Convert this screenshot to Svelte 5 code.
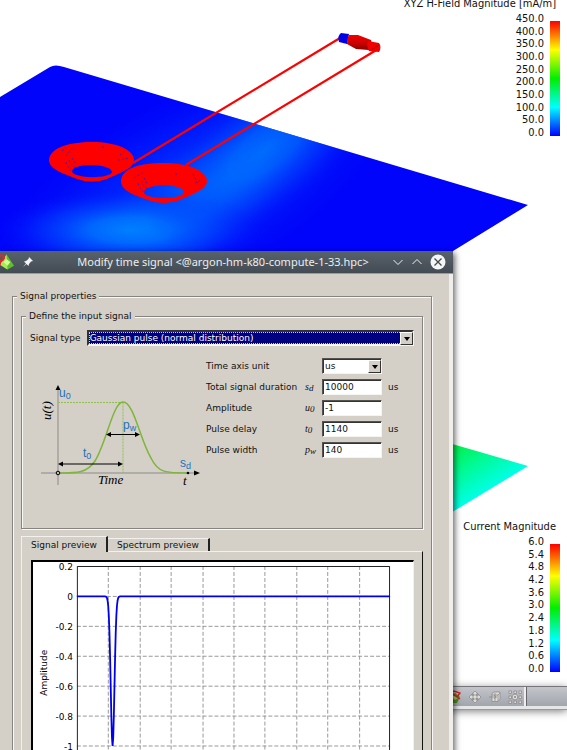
<script>

    let signalType = 'Gaussian pulse (normal distribution)'
    let unit = 'us'
    let tab = 'signal'

    let fields = [
        { id: 'duration', label: 'Total signal duration', sym: 's', sub: 'd', value: '10000', unit: 'us' },
        { id: 'amplitude', label: 'Amplitude', sym: 'u', sub: '0', value: '-1', unit: '' },
        { id: 'delay', label: 'Pulse delay', sym: 't', sub: '0', value: '1140', unit: 'us' },
        { id: 'width', label: 'Pulse width', sym: 'p', sub: 'w', value: '140', unit: 'us' }
    ]

    const hField = ['450.0', '400.0', '350.0', '300.0', '250.0', '200.0', '150.0', '100.0', '50.0', '0.0']
    const current = ['6.0', '5.4', '4.8', '4.2', '3.6', '3.0', '2.4', '1.8', '1.2', '0.6', '0.0']

    // plot area, in chart units
    const left = 44, right = 358, top = 4, zero = 34, step = 30
    const rows = ['0.2', '0', '-0.2', '-0.4', '-0.6', '-0.8', '-1']
    const cols = [1, 2, 3, 4, 5, 6, 7, 8, 9]

    const pulse = (duration, amp, delay, width) => {
        const pts = []
        for (let t = 0; t <= duration; t += 20) {
            const u = amp * Math.exp(-4 * Math.LN2 * ((t - delay) / width) ** 2)
            pts.push(`${left + (right - left) * t / duration},${zero + .5 - u * step * 5}`)
        }
        return pts.join(' ')
    }

    $: points = pulse(...fields.map(f => +f.value))

</script>

<main>
    <section class='view field'>
        <svg class='scene' viewBox='0 0 567 251' preserveAspectRatio='xMinYMin slice' aria-hidden='true'>
            <defs>
                <clipPath id='plane'><path d='M0 97L50 67Q55 64 64 67L528 205L453 251H0Z' /></clipPath>
                <radialGradient id='glow'>
                    <stop offset='0' stop-color='#0088ff' />
                    <stop offset='.3' stop-color='#007cff' stop-opacity='.85' />
                    <stop offset='.65' stop-color='#0050ff' stop-opacity='.45' />
                    <stop offset='1' stop-color='#0010ff' stop-opacity='0' />
                </radialGradient>
                <linearGradient id='core' x2='0' y2='1'>
                    <stop offset='0' stop-color='#f00000' />
                    <stop offset='.5' stop-color='#d00000' />
                    <stop offset='1' stop-color='#8c0000' />
                </linearGradient>
            </defs>
            <g clip-path='url(#plane)'>
                <rect width='567' height='251' fill='#0004fa' />
                <ellipse cx='190' cy='190' rx='240' ry='100' fill='url(#glow)' opacity='.4' transform='rotate(-28 190 190)' />
                <ellipse cx='195' cy='200' rx='110' ry='60' fill='url(#glow)' opacity='.5' transform='rotate(-25 195 200)' />
                <ellipse cx='130' cy='230' rx='135' ry='42' fill='url(#glow)' opacity='.9' />
                <ellipse cx='265' cy='150' rx='140' ry='62' fill='url(#glow)' opacity='.7' transform='rotate(-36 265 150)' />
            </g>
            <path d='M133 163L340 38M186 165L378 49' stroke='#ff0000' stroke-width='2.2' fill='none' />
            <g fill='#ff0000' fill-rule='evenodd'>
                <path d='M49 160C50 148 68 142 92 142C117 142 134 150 134 160C134 169 117 174 107 179Q92 184 77 179C66 174 49 170 49 160ZM72 171C72 179 111 179 112 172C110 163 74 163 72 171Z' />
                <path d='M121 181C122 168 140 163 164 163C189 163 207 171 207 181C207 190 190 195 180 200Q163 206 148 200C138 196 121 192 121 181ZM144 192C144 200 183 200 184 192C182 183 146 183 144 192Z' />
            </g>
            <g fill='none' stroke='#1020e0' stroke-width='.7' stroke-dasharray='2 2'>
                <path d='M66 162Q69 170 73 172M69 160Q72 167 77 168M72 158L76 164M62 151L66 148M66 156L73 147M120 155L125 151M118 160L130 158M102 147H105' />
                <path d='M138 183Q141 191 145 193M141 181Q144 188 149 189M144 178L148 185M134 178L143 172M193 174L198 184M195 183L201 180M175 174H178' />
            </g>
            <path d='M341 33L349 34L347 44L339 42Q337 36 341 33Z' fill='#0000e8' />
            <path d='M349 35L358 35L371 40Q373 46 369 50L356 49L347 44Q347 38 349 35Z' fill='url(#core)' />
            <path d='M368 41L379 43Q382 47 379 52L369 51Q366 46 368 41Z' fill='#f00000' />
            <path d='M371 50L379 45' stroke='#b00000' />
        </svg>
        <div class='legend'>
            <h2>XYZ H-Field Magnitude [mA/m]</h2>
            <div class='scale'>
                <ul>{#each hField as v}<li>{v}</li>{/each}</ul>
                <div class='bar'></div>
            </div>
        </div>
    </section>

    <section class='view surface'>
        <svg class='scene' viewBox='0 0 567 435' preserveAspectRatio='xMinYMin slice' aria-hidden='true'>
            <defs>
                <linearGradient id='green' gradientUnits='userSpaceOnUse' x1='450' y1='190' x2='482' y2='242'>
                    <stop offset='0' stop-color='#00ee38' />
                    <stop offset='.5' stop-color='#00fa90' />
                    <stop offset='1' stop-color='#00ffe4' />
                </linearGradient>
            </defs>
            <path d='M380 172L528 215L380 305Z' fill='url(#green)' />
        </svg>
        <div class='legend'>
            <h2>Current Magnitude</h2>
            <div class='scale'>
                <ul>{#each current as v}<li>{v}</li>{/each}</ul>
                <div class='bar'></div>
            </div>
        </div>
    </section>

    <footer>
        <div class='tools'>
            <button aria-label='Model'>
                <svg viewBox='0 0 14 14'>
                    <path d='M1 6L7 3L12 7L9 13H2Z' fill='#4c8f20' />
                    <path d='M3 7L7 5L10 8L7 10Z' fill='#a8d860' />
                    <path d='M1 5L6 1L12 3L9 7L5 4M9 7L12 9' fill='none' stroke='#d82020' stroke-width='1.4' />
                </svg>
            </button>
            <button aria-label='Move'>
                <svg viewBox='0 0 14 14'>
                    <path d='M7 1L10 4H8V6H10V4L13 7L10 10V8H8V10H10L7 13L4 10H6V8H4V10L1 7L4 4V6H6V4H4Z' fill='#dddcd5' stroke='#85858a' stroke-width='.7' />
                </svg>
            </button>
            <button aria-label='Box'>
                <svg viewBox='0 0 14 14'>
                    <path d='M4 3.500L6 2H12V9L10 11.500H4Z' fill='#dedcd3' stroke='#85858a' stroke-width='.7' />
                    <path d='M4 5H10V11M10 5L12 3M1 7H9M6 5L8 7L6 9M7 3V11' fill='none' stroke='#8c8c8e' stroke-width='.8' />
                </svg>
            </button>
            <button aria-label='Grid'>
                <svg viewBox='0 0 14 14'>
                    <g fill='#e0ded5' stroke='#85858a' stroke-width='.7'>
                        {#each [1, 6, 11] as x}
                            {#each [1, 6, 11] as y}
                                <rect {x} {y} width='2.4' height='2.4' />
                            {/each}
                        {/each}
                        <circle cx='7' cy='7' r='2.8' />
                    </g>
                    <circle cx='7' cy='7' r='1' fill='#858585' />
                </svg>
            </button>
        </div>
        <div class='status'></div>
    </footer>

    <div class='dialog' role='dialog' aria-labelledby='title'>
        <header>
            <svg class='logo' viewBox='0 0 16 18' aria-hidden='true'>
                <path d='M7 1L15 13L8 17L0 12Z' fill='#5fc02c' />
                <path d='M7 1L8 17L0 12Z' fill='#a6ec58' />
                <path d='M7 6L11 9L8 13L4 9Z' fill='#d7ffa0' />
                <path d='M0 2H3Q6 4 3 7L0 8M0 8V12' fill='none' stroke='#e02828' stroke-width='2' />
            </svg>
            <button aria-label='Keep above'>
                <svg viewBox='0 0 12 12'>
                    <path d='M7 1L11 5L9 5.5L7 8L6.5 10L4.5 8L1 11L4 7.500L2 5.500L4 5L6.500 3Z' fill='#f3f4f5' />
                </svg>
            </button>
            <h1 id='title'>Modify time signal &lt;@argon-hm-k80-compute-1-33.hpc&gt;</h1>
            <button aria-label='Minimize'>
                <svg viewBox='0 0 12 12'><path d='M1.500 4L6 8.500L10.500 4' fill='none' stroke='#eef0f1' /></svg>
            </button>
            <button aria-label='Maximize'>
                <svg viewBox='0 0 12 12'><path d='M1.500 8L6 3.500L10.500 8' fill='none' stroke='#eef0f1' /></svg>
            </button>
            <button class='close' aria-label='Close'>
                <svg viewBox='0 0 16 16'>
                    <circle cx='8' cy='8' r='7.500' fill='#f4f5f5' />
                    <path d='M4.500 4.500L11.500 11.500M11.500 4.500L4.500 11.500' stroke='#414a52' stroke-width='1.300' />
                </svg>
            </button>
        </header>

        <form>
            <fieldset>
                <legend>Signal properties</legend>

                <fieldset class='input'>
                    <legend>Define the input signal</legend>
                    <div class='type'>
                        <label for='type'>Signal type</label>
                        <span class='combo wide'>
                            <select id='type' bind:value={signalType}>
                                <option>Gaussian pulse (normal distribution)</option>
                            </select>
                        </span>
                    </div>

                    <div class='body'>
                        <svg class='diagram' viewBox='0 0 164 106' aria-label='Gaussian pulse'>
                            <path d='M20 8V103M3 91H156' stroke='#8b8a86' fill='none' />
                            <path d='M20 3L22.500 8H17.500ZM162 91L156 88.500V93.500Z' />
                            <path d='M20 20.500H85M85 20.500V91' stroke='#8fc050' stroke-dasharray='2 1' fill='none' />
                            <path d='M20 91C40 91 49 91 57 79C68 62 75 20 85 20C96 20 102 58 113 76C120 91 128 91 151 91' fill='none' stroke='#7fb539' stroke-width='1.500' />
                            <path d='M22 82H83M71 52.500H99' stroke='#000' />
                            <path d='M20 82L25 79.500V84.500ZM85 82L80 79.500V84.500ZM68 52.500L73 50V55ZM102 52.500L97 50V55Z' />
                            <circle cx='20' cy='91' r='1.800' fill='#bbb' stroke='#000' />
                            <circle cx='150' cy='91' r='1.300' />
                            <g class='blue'>
                                <text x='21' y='15'>u<tspan dy='2' class='sub'>0</tspan></text>
                                <text x='85' y='47'>p<tspan dy='2' class='sub'>w</tspan></text>
                                <text x='45' y='75'>t<tspan dy='2' class='sub'>0</tspan></text>
                                <text x='142' y='85'>s<tspan dy='2' class='sub'>d</tspan></text>
                            </g>
                            <g class='math'>
                                <text x='60' y='102'>Time</text>
                                <text x='145' y='103'>t</text>
                                <text transform='translate(13 38) rotate(-90)'>u(t)</text>
                            </g>
                        </svg>

                        <div class='fields'>
                            <label for='unit'>Time axis unit</label>
                            <i></i>
                            <span class='combo'>
                                <select id='unit' bind:value={unit}>
                                    <option>us</option>
                                </select>
                            </span>
                            <span></span>
                            {#each fields as f}
                                <label for={f.id}>{f.label}</label>
                                <i>{f.sym}<sub>{f.sub}</sub></i>
                                <input id={f.id} type='text' bind:value={f.value}>
                                <span>{f.unit}</span>
                            {/each}
                        </div>
                    </div>
                </fieldset>

                <div class='tabs' role='tablist'>
                    <button type='button' role='tab' aria-selected={tab === 'signal'} on:click={() => tab = 'signal'}>Signal preview</button>
                    <button type='button' role='tab' aria-selected={tab === 'spectrum'} on:click={() => tab = 'spectrum'}>Spectrum preview</button>
                </div>
                <div class='panel'>
                    <div class='plot'>
                        <svg viewBox='0 0 381 220' aria-label='Amplitude'>
                            <g class='grid'>
                                {#each cols as c}
                                    <path d='M{left + Math.round(c * 31.4) + .5} {top}V215' />
                                {/each}
                                {#each rows as r, n}
                                    <path d='M{left} {top + n * step + .5}H{right}' />
                                {/each}
                            </g>
                            <path d='M{left + .5} 215V{top + .5}H{right - .5}V215' fill='none' stroke='#222' />
                            {#each rows as r, n}
                                <text x='40' y={top + n * step + 4} text-anchor='end'>{r}</text>
                            {/each}
                            <text transform='translate(14 111) rotate(-90)' text-anchor='middle'>Amplitude</text>
                            <polyline {points} fill='none' stroke='#0000ee' stroke-width='1.800' />
                        </svg>
                    </div>
                </div>
            </fieldset>
        </form>
    </div>
</main>

<style>

    :global(body) {
        margin: 0;
        background: #fff;
    }

    main {
        position: relative;
        height: 100vh;
        min-height: 750px;
        overflow: hidden;
        font: 9px/12px 'DejaVu Sans', sans-serif;
        color: #111;
    }

    button {
        padding: 0;
        border: 0;
        background: none;
        color: inherit;
        font: inherit;
    }

    svg {
        display: block;
    }

    /* 3d views */

    .view {
        position: relative;
        display: flex;
        flex-direction: column;
        box-sizing: border-box;
    }

    .field {
        height: 251px;
    }

    .surface {
        height: 435px;
        justify-content: flex-end;
        padding-bottom: 11px;
    }

    .scene {
        position: absolute;
        inset: 0;
        width: 100%;
        height: 100%;
    }

    .legend {
        position: relative;
        display: flex;
        flex-direction: column;
        align-items: flex-end;
        gap: 2px;
        padding-right: 7px;
    }

    .field .legend {
        margin-top: -3px;
    }

    h2 {
        margin: 0 4px 0 0;
        font: 11px/14px 'DejaVu Sans Condensed', 'DejaVu Sans', sans-serif;
    }

    .scale {
        display: flex;
        gap: 6px;
    }

    ul {
        display: flex;
        flex-direction: column;
        justify-content: space-between;
        height: 126px;
        margin: 0;
        padding: 0;
        list-style: none;
        text-align: right;
        font: 11px/12px 'DejaVu Sans Condensed', 'DejaVu Sans', sans-serif;
    }

    .surface ul {
        height: 139px;
    }

    .bar {
        width: 10px;
        margin: 8px 0 3px;
        background: linear-gradient(#f00, #ff0 25%, #0e0 50%, #0ff 75%, #00f);
    }

    footer {
        display: flex;
        height: 19px;
        border-top: 1px solid #77777b;
        border-bottom: 3px solid #e6e6e8;
        background: linear-gradient(#c3c5cb, #a3a5ad);
        box-shadow: 0 1px 0 #999, 0 2px 8px #777;
    }

    .tools {
        flex: 1;
        display: flex;
        align-items: center;
        justify-content: flex-end;
        gap: 6px;
        padding-right: 2px;
        border-right: 2px solid #eee;
    }

    .tools svg {
        width: 14px;
        height: 14px;
    }

    .status {
        width: 40px;
        border-left: 1px solid #66666b;
    }

    /* dialog */

    .dialog {
        position: absolute;
        top: 251px;
        left: 0;
        right: 114px;
        background: #d4d0c8;
        box-shadow: 2px 2px 6px rgba(0, 0, 0, .6);
    }

    header {
        display: flex;
        align-items: center;
        gap: 7px;
        height: 22px;
        padding-right: 7px;
        border-bottom: 1px solid #62aedb;
        background: linear-gradient(#58626a, #434c54);
        color: #eceeef;
    }

    header svg {
        width: 12px;
        height: 12px;
    }

    header .logo {
        width: 15px;
        height: 18px;
    }

    header .close svg {
        width: 16px;
        height: 16px;
    }

    h1 {
        flex: 1;
        margin: 0;
        padding-left: 20px;
        text-align: center;
        white-space: nowrap;
        font: 11px/20px 'Noto Sans', sans-serif;
    }

    form {
        padding: 16px 17px 16px 12px;
        border-right: 4px solid #efeeec;
    }

    fieldset {
        min-width: 0;
        margin: 0;
        padding: 8px;
        border: 1px solid #868480;
        box-shadow: 1px 1px 0 #f8f8f6, inset 1px 1px 0 #f8f8f6;
    }

    legend {
        margin-left: -4px;
        padding: 0 3px;
        background: #d4d0c8;
    }

    .input {
        min-height: 201px;
    }

    .type {
        display: flex;
        align-items: center;
        gap: 6px;
    }

    .wide {
        flex: 1;
    }

    .combo {
        position: relative;
        display: block;
    }

    select,
    input {
        display: block;
        box-sizing: border-box;
        width: 100%;
        height: 16px;
        margin: 0;
        padding: 0 2px;
        border: 1px solid;
        border-color: #55534f #f4f4f2 #f4f4f2 #55534f;
        border-radius: 0;
        box-shadow: inset 1px 1px 0 #333;
        outline: 0;
        appearance: none;
        background: #fff;
        color: #111;
        font: inherit;
    }

    .wide select {
        border: 2px solid;
        border-color: #333 #f4f4f2 #f4f4f2 #333;
        padding: 0 1px;
        box-shadow: none;
        outline: 1px dotted #d8d890;
        outline-offset: -3px;
        background: #000080;
        color: #fff;
    }

    .combo::before {
        content: '';
        position: absolute;
        z-index: 1;
        top: 2px;
        right: 1px;
        box-sizing: border-box;
        width: 13px;
        height: 13px;
        border: 1px solid;
        border-color: #fff #333 #333 #fff;
        background: #d4d0c8;
        pointer-events: none;
    }

    .combo::after {
        content: '';
        position: absolute;
        z-index: 1;
        top: 7px;
        right: 4px;
        border: 3px solid transparent;
        border-top: 4px solid #000;
        border-bottom: 0;
        pointer-events: none;
    }

    .body {
        display: flex;
        gap: 4px;
        padding: 12px 0 0 8px;
    }

    .diagram {
        flex: none;
        width: 164px;
        height: 106px;
        margin-top: 24px;
    }

    .blue {
        fill: #1c6fb8;
        font: 12px 'Liberation Sans', sans-serif;
    }

    .blue .sub {
        font-size: 9px;
    }

    .math {
        font: italic 13px 'Liberation Serif', serif;
    }

    .fields {
        display: grid;
        grid-template-columns: 99px 17px 60px auto;
        grid-auto-rows: 16px;
        align-items: center;
        row-gap: 5px;
        height: 100px;
        white-space: nowrap;
    }

    .fields > span:not(.combo) {
        padding-left: 6px;
    }

    i {
        font: italic 10px/12px 'Liberation Serif', serif;
    }

    sub {
        font-size: 9px;
        line-height: 0;
        vertical-align: -1px;
    }

    .tabs {
        display: flex;
        align-items: flex-end;
        margin-top: 7px;
    }

    .tabs button {
        height: 13px;
        padding: 0 9px;
        border: 1px solid;
        border-color: #f2f1ee #222 transparent #f2f1ee;
        border-width: 1px 2px 0 0;
    }

    .tabs button[aria-selected='true'] {
        position: relative;
        height: 16px;
        margin-bottom: -1px;
        border-left-width: 1px;
        background: #d4d0c8;
    }

    .panel {
        padding: 8px 8px 8px 9px;
        border: 1px solid #f2f1ee;
        border-right: 1px solid #111;
    }

    .plot {
        border: 1px solid;
        border-width: 2px 1px 1px 2px;
        border-color: #000 #f2f1ee #f2f1ee #000;
        background: #fff;
    }

    .plot svg {
        width: 100%;
        overflow: hidden;
    }

    .grid {
        fill: none;
        stroke: #999;
        stroke-dasharray: 4 2;
    }

</style>
